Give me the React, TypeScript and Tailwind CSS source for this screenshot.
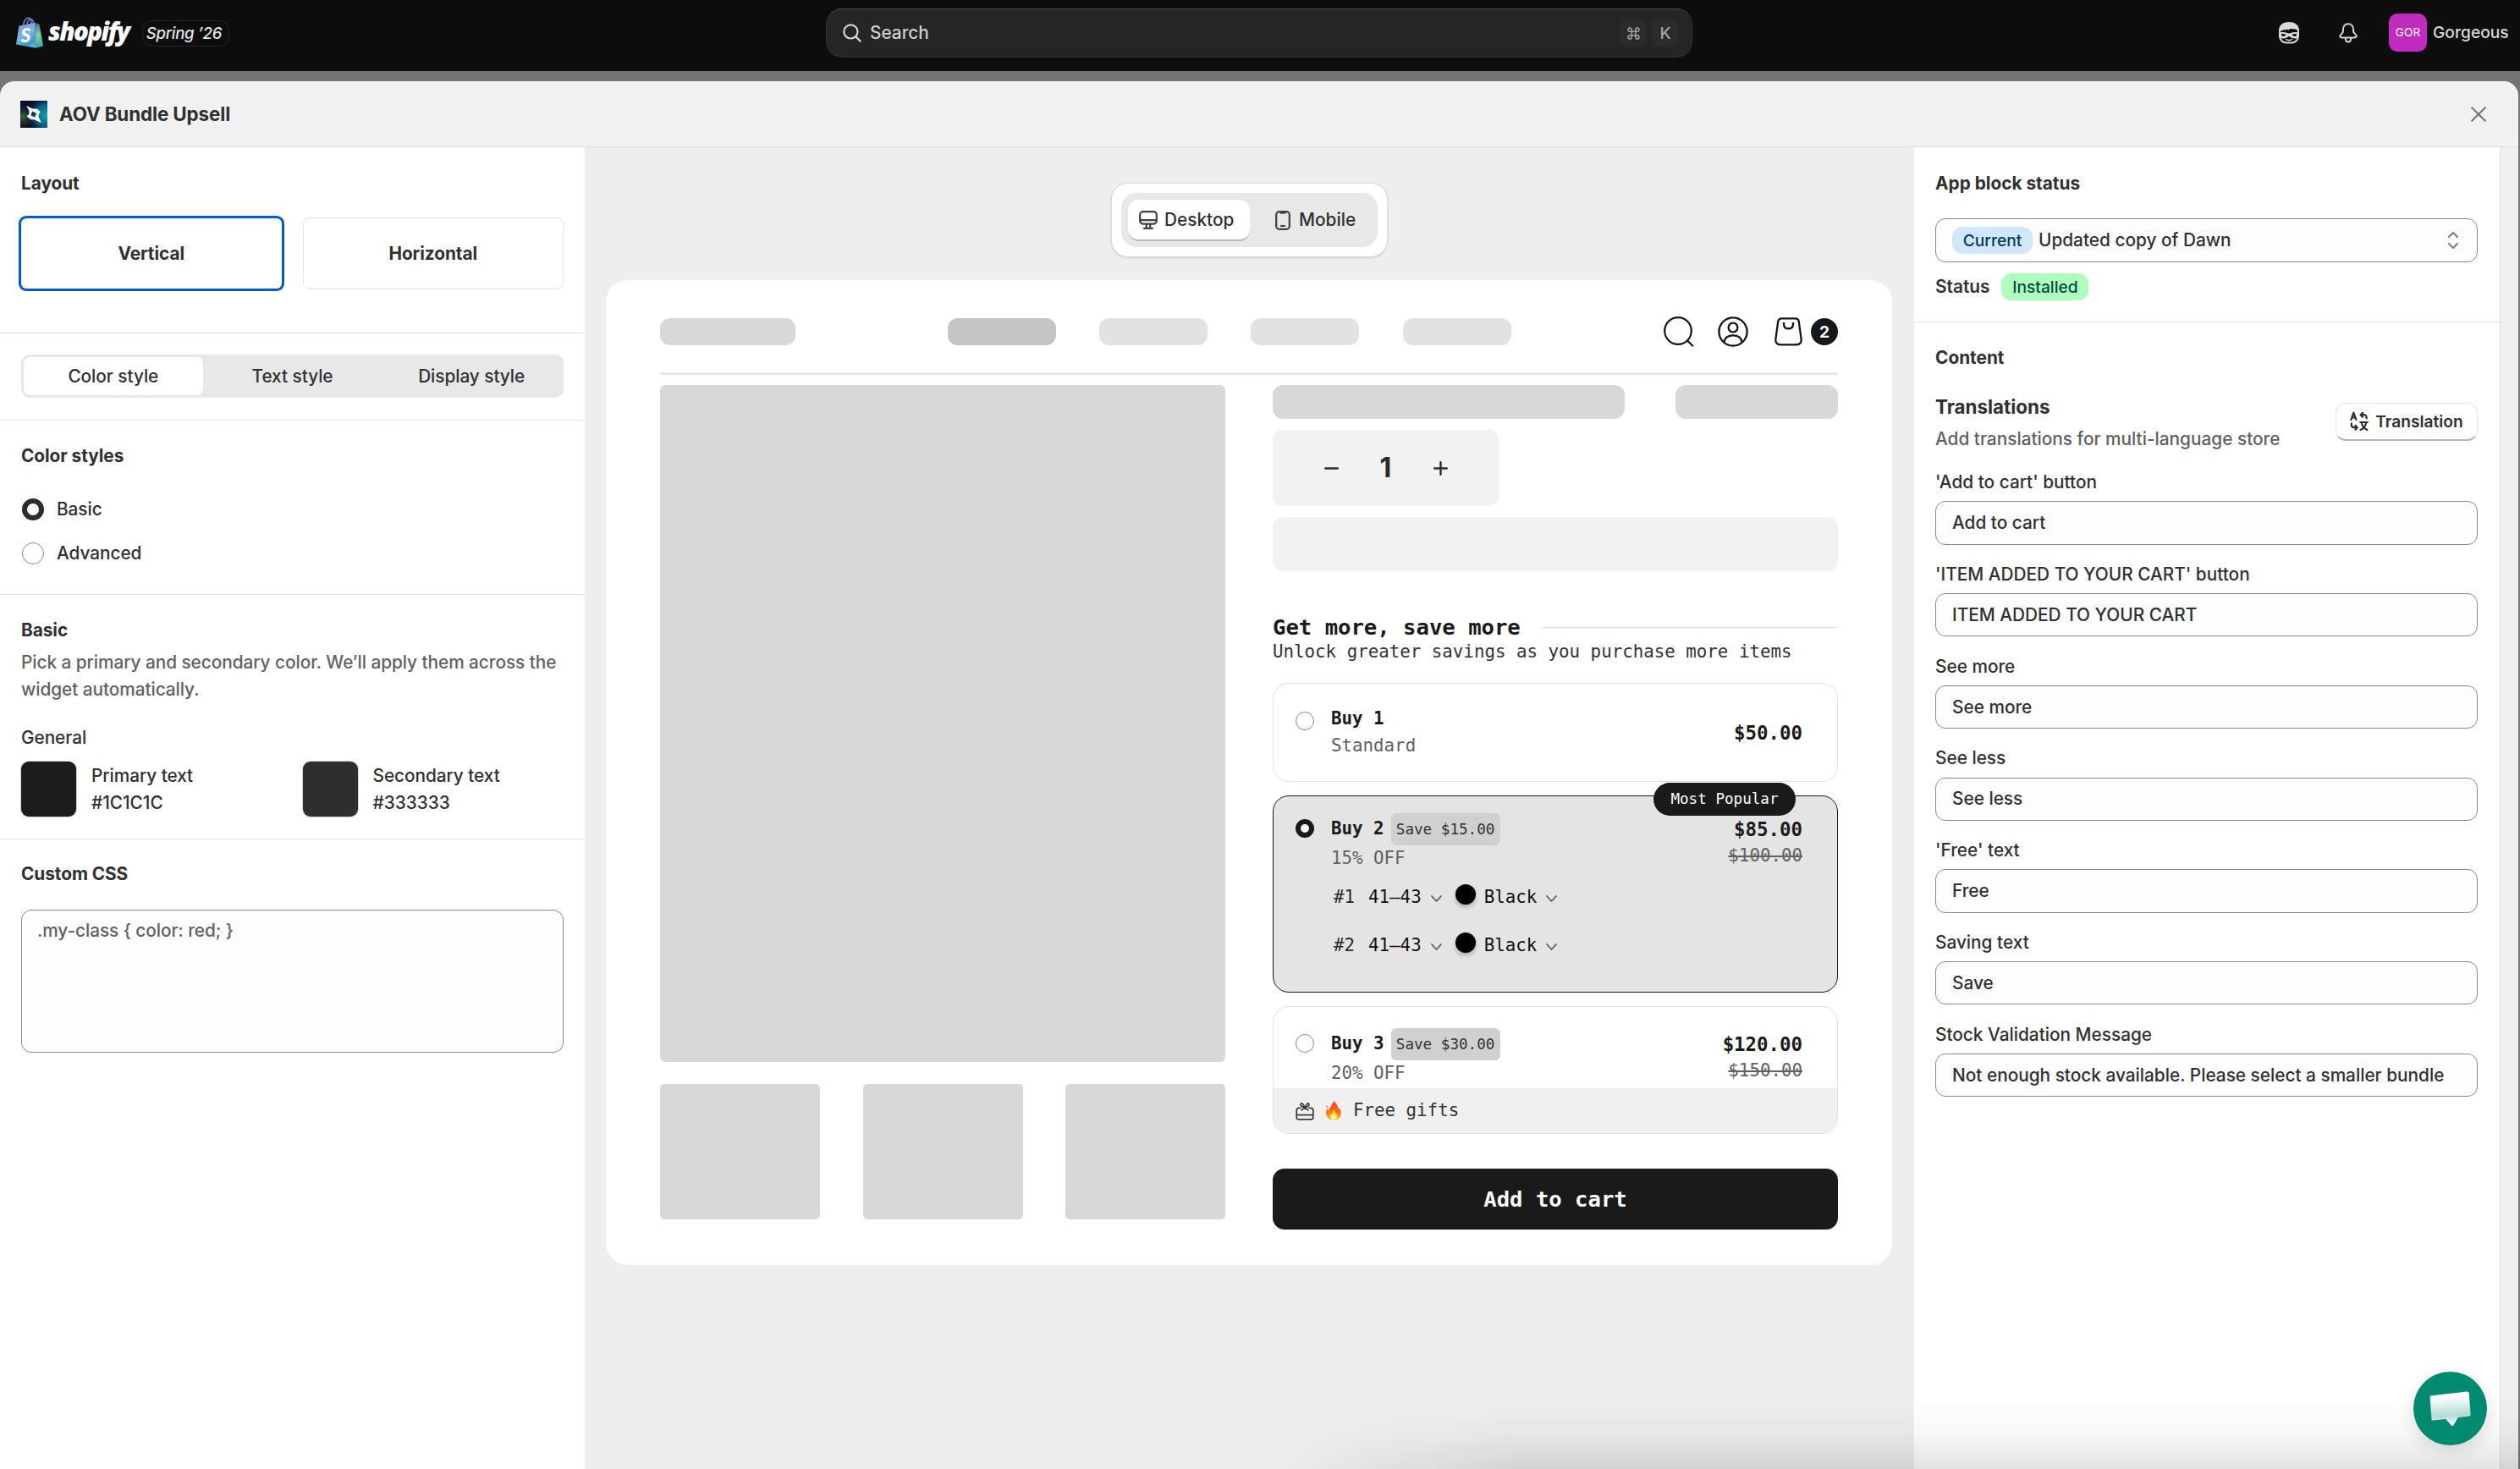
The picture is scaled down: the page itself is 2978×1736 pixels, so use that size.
import React from "react";
import clsx from "clsx";

const sans = "font-['Inter','Liberation_Sans',sans-serif]";
const mono = "font-['DejaVu_Sans_Mono','Liberation_Mono',monospace]";

const ShopifyBag = () => (
  <svg width="32" height="37" viewBox="0 0 32 37" fill="none">
    <defs>
      <linearGradient id="bag" x1="4" y1="6" x2="24" y2="37" gradientUnits="userSpaceOnUse">
        <stop stopColor="#7d96d8" />
        <stop offset="0.45" stopColor="#7fb2e6" />
        <stop offset="0.75" stopColor="#3f95c4" />
        <stop offset="1" stopColor="#7bbdf0" />
      </linearGradient>
      <linearGradient id="bagSide" x1="26" y1="7" x2="27" y2="36" gradientUnits="userSpaceOnUse">
        <stop stopColor="#4a66a8" />
        <stop offset="0.5" stopColor="#79d3a0" />
        <stop offset="1" stopColor="#3aa7a8" />
      </linearGradient>
    </defs>
    <path d="M8.5 10C9 5 12 1.3 14.6 1.2C17.2 1.1 18 5 17.8 8.5M13 9C13.4 5 15.4 2.2 17.4 2.4C19.6 2.8 20.4 5.5 20.6 8" stroke="#6a7fc9" strokeWidth="1.7" />
    <path d="M3.5 10.6L22.5 6.8L23.2 36.8L0 32.4Z" fill="url(#bag)" />
    <path d="M22.5 6.8L27.6 8.8L32 34.4L23.2 36.8Z" fill="url(#bagSide)" />
    <text x="5.6" y="30" fontSize="23" fontWeight="900" fontStyle="italic" fill="#fff" fontFamily="Lato, sans-serif">S</text>
  </svg>
);

const AppLogo = () => (
  <svg width="32" height="32" viewBox="0 0 32 32">
    <defs>
      <radialGradient id="lg1" cx="0.1" cy="0.6" r="0.5">
        <stop stopColor="#3f6b3a" />
        <stop offset="1" stopColor="#0b1430" stopOpacity="0" />
      </radialGradient>
      <radialGradient id="lg2" cx="0.95" cy="0.55" r="0.75">
        <stop stopColor="#0fa3a0" />
        <stop offset="0.55" stopColor="#0d5a86" />
        <stop offset="1" stopColor="#0b1430" stopOpacity="0" />
      </radialGradient>
    </defs>
    <rect width="32" height="32" fill="#090e26" />
    <rect width="32" height="32" fill="url(#lg2)" />
    <rect width="32" height="32" fill="url(#lg1)" />
    <path fillRule="evenodd" d="M7.2 6L14.5 9.6L20 9.8L24 13.2L21.6 16L21.8 19.6L24.8 26L16.8 22.4L12 22L7.6 18.6L10.6 15.6L10.4 12ZM14.2 12.4L12.4 17.2L17 19.8L19.6 15Z" fill="#fff" />
  </svg>
);

const FaceIcon = () => (
  <svg width="24" height="26" viewBox="0 0 24 26" fill="none">
    <rect x="1" y="3" width="22" height="21.6" rx="8" stroke="#d9d9d9" strokeWidth="2" />
    <path d="M0 11C0 4 4 0 12 0C20 0 24 4 24 11L20 8.5L13 8L11.5 9.5L9 8.5L7.5 10L6.5 8.8L4 10Z" fill="#d9d9d9" />
    <path d="M0 12.4C4 11.4 8.6 12.2 12 13.6C15.4 12.2 20 11.4 24 12.4V17.4C20.6 20.8 15 19.6 12 16.8C9 19.6 3.4 20.8 0 17.4Z" fill="#d9d9d9" />
    <path d="M3 13.8L9 14.8L6 16.9L3.4 16.4ZM21 13.8L15 14.8L18 16.9L20.6 16.4Z" fill="#0d0d0d" />
    <path d="M8.6 20.6C10.6 21.8 13.4 21.8 15.4 20.6" stroke="#d9d9d9" strokeWidth="1.6" strokeLinecap="round" />
  </svg>
);

const BellIcon = () => (
  <svg width="22" height="24" viewBox="0 0 22 24" fill="none" stroke="#d9d9d9" strokeWidth="2" strokeLinejoin="round">
    <path d="M11 1.2C7.4 1.2 5.2 3.8 5 7.2L4.8 10.6C4.7 12 1.2 14 1.2 15.6C1.2 17 2.6 17.4 4 17.4H18C19.4 17.4 20.8 17 20.8 15.6C20.8 14 17.3 12 17.2 10.6L17 7.2C16.8 3.8 14.6 1.2 11 1.2Z" />
    <path d="M7.8 18C7.8 21 9 22.6 11 22.6C13 22.6 14.2 21 14.2 18" />
  </svg>
);

const TopBar = () => (
  <header className="flex h-[84px] items-start bg-[#0d0d0d]">
    <div className="flex w-[976px] shrink-0 items-start pl-[19px]">
      <div className="mt-[20px]">
        <ShopifyBag />
      </div>
      <span className="mt-[19px] ml-[6px] w-[99px] font-['Open_Sans'] text-[29.5px] leading-[36px] font-extrabold tracking-[-1.6px] text-white italic">
        shopify
      </span>
      <span className="ml-[12px] mt-[24px] flex h-[31px] w-[103px] items-center justify-center rounded-[12px] border border-[#262626] pr-[4px] text-[18.6px] font-medium tracking-[-0.3px] whitespace-nowrap text-[#e3e3e3] italic">
        Spring ’26
      </span>
    </div>
    <div className="mt-[10px] flex h-[58px] w-[1024px] items-center rounded-[19px] border border-[#333] border-t-[#4a4a4a] bg-[#252525] pr-[15px] pl-[19px]">
      <svg width="22" height="22" viewBox="0 0 22 22" fill="none" stroke="#d4d4d4" strokeWidth="2.2" strokeLinecap="round">
        <circle cx="9.4" cy="9.4" r="8.1" />
        <path d="M15.4 15.4L20.6 20.6" />
      </svg>
      <span className="ml-[10px] flex-1 text-[20.8px] font-[450] text-[#cfcfcf]">Search</span>
      <kbd className="flex h-8 w-8 items-center justify-center rounded-lg bg-[#2b2b2b]">
        <svg width="15" height="15" viewBox="0 0 16 16" fill="none" stroke="#a3a3a3" strokeWidth="1.6">
          <path d="M5.5 5.5V3.3A2.2 2.2 0 1 0 3.3 5.5H12.7A2.2 2.2 0 1 0 10.5 3.3V12.7A2.2 2.2 0 1 0 12.7 10.5H3.3A2.2 2.2 0 1 0 5.5 12.7Z" />
        </svg>
      </kbd>
      <kbd className={clsx(sans, "ml-[6px] flex h-8 w-8 items-center justify-center rounded-lg bg-[#2b2b2b] text-[19.2px] font-medium text-[#a3a3a3]")}>
        K
      </kbd>
    </div>
    <div className="flex flex-1 items-start justify-end pr-[14px]">
      <div className="mt-[26px]">
        <FaceIcon />
      </div>
      <div className="mt-[27px] ml-[47px]">
        <BellIcon />
      </div>
      <div className="mt-[16px] ml-[37px] flex h-[45px] w-[45px] items-center justify-center rounded-[10px] bg-[#c02bc0] text-[13.6px] font-normal text-white">
        GOR
      </div>
      <span className="mt-[16px] ml-[7px] w-[89px] text-[19.2px] leading-[45px] font-[550] text-[#d9d9d9]">Gorgeous</span>
    </div>
  </header>
);

const Radio = ({ checked }: { checked?: boolean }) => (
  <span
    className={clsx(
      "block size-[26px] rounded-full bg-white",
      checked ? "border-[6.5px] border-[#2b2b2b]" : "border border-[#8a8a8a]"
    )}
  />
);

const SectionTitle = ({ children }: { children: React.ReactNode }) => (
  <h3 className="h-8 text-[20.8px] leading-[34px] font-[650]">{children}</h3>
);

const Swatch = ({ label, value, bg }: { label: string; value: string; bg: string }) => (
  <div className="flex">
    <span className={clsx("size-[65px] rounded-[9px] ring-1 ring-[#d0d0d0]", bg)} />
    <div className="mt-px ml-[18px]">
      <p>{label}</p>
      <p>{value}</p>
    </div>
  </div>
);

const LeftPanel = () => (
  <aside className="w-[691px] shrink-0 bg-white text-[20.8px] leading-8 font-[450] tracking-[-0.05px]">
    <section className="h-[220px] border-b border-[#e3e3e3] px-[25px] pt-[26px]">
      <SectionTitle>Layout</SectionTitle>
      <div className="mt-[25px] grid grid-cols-2 gap-6">
        <div className="mt-px mr-px flex h-[83px] items-center justify-center rounded-[6px] font-[650] ring-3 ring-[#005bd3]">
          Vertical
        </div>
        <div className="flex h-[85px] items-center justify-center rounded-[8px] border border-[#e3e3e3] font-[650]">
          Horizontal
        </div>
      </div>
    </section>
    <section className="h-[103px] border-b border-[#e3e3e3] px-[25px] pt-[25px]">
      <div className="flex h-[51px] rounded-[10px] bg-[#e8e8e8] p-[3px]">
        <span className="flex flex-1 items-center justify-center rounded-[8px] bg-white">Color style</span>
        <span className="flex flex-1 items-center justify-center">Text style</span>
        <span className="flex flex-1 items-center justify-center">Display style</span>
      </div>
    </section>
    <section className="h-[206px] border-b border-[#e3e3e3] px-[25px] pt-[25px]">
      <SectionTitle>Color styles</SectionTitle>
      <div className="mt-8 flex items-center gap-[15px] pl-px">
        <Radio checked />
        Basic
      </div>
      <div className="mt-[20px] flex items-center gap-[15px] pl-px">
        <Radio />
        Advanced
      </div>
    </section>
    <section className="h-[289px] border-b border-[#e3e3e3] px-[25px] pt-[25px]">
      <SectionTitle>Basic</SectionTitle>
      <p className="mt-[7px] text-[#616161]">
        Pick a primary and secondary color. We’ll apply them across the widget automatically.
      </p>
      <p className="mt-[25px]">General</p>
      <div className="mt-[12px] grid grid-cols-2 gap-6">
        <Swatch label="Primary text" value="#1C1C1C" bg="bg-[#1c1c1c]" />
        <Swatch label="Secondary text" value="#333333" bg="bg-[#2e2e2e]" />
      </div>
    </section>
    <section className="px-[25px] pt-[24px]">
      <SectionTitle>Custom CSS</SectionTitle>
      <div className="mt-[27px] h-[169px] rounded-[12px] border border-[#8a8a8a] bg-[#fdfdfd] px-[18px] pt-[8px] text-[#616161]">
        {".my-class { color: red; }"}
      </div>
    </section>
  </aside>
);

const Field = ({ label, value }: { label: string; value: string }) => (
  <div className="mb-[19.2px]">
    <p>{label}</p>
    <div className="mt-[6.4px] flex h-[51.2px] items-center rounded-[12px] border border-[#8a8a8a] bg-[#fdfdfd] px-[19px] whitespace-nowrap">
      {value}
    </div>
  </div>
);

const fields = [
  { label: "'Add to cart' button", value: "Add to cart" },
  { label: "'ITEM ADDED TO YOUR CART' button", value: "ITEM ADDED TO YOUR CART" },
  { label: "See more", value: "See more" },
  { label: "See less", value: "See less" },
  { label: "'Free' text", value: "Free" },
  { label: "Saving text", value: "Save" },
  { label: "Stock Validation Message", value: "Not enough stock available. Please select a smaller bundle" },
];

const TranslateIcon = () => (
  <svg width="22" height="24" viewBox="0 0 22 24" fill="none" stroke="#303030" strokeWidth="2.2" strokeLinecap="round" strokeLinejoin="round">
    <path d="M1.4 10L4.4 1.6L7.4 10M2.4 7.4H6.4" />
    <path d="M19.6 8.4V7.4C19.6 5.4 18.4 4.2 16.4 4.2H12.8M15 1.8L12.6 4.2L15 6.6" />
    <path d="M1.8 14.4V16C1.8 18 3 19.2 5 19.2H8.4M6.4 16.8L8.8 19.2L6.4 21.6" />
    <path d="M12.2 13H20.8M13.8 13.4C14.4 17.2 16.6 20.4 20.4 22M19.2 13.4C18.6 17.2 16.4 20.4 12.6 22" />
  </svg>
);

const RightPanel = () => (
  <aside className="w-[692px] shrink-0 bg-white text-[20.8px] leading-8 font-[450]">
    <section className="h-[207px] border-b border-[#e3e3e3] pt-[26px] pr-[26px] pl-[25px]">
      <SectionTitle>App block status</SectionTitle>
      <div className="mt-[26px] flex h-[52px] items-center rounded-[12px] border border-[#8a8a8a] bg-[#fdfdfd] pr-[21px] pl-[19px]">
        <span className="flex h-8 w-[95px] items-center justify-center rounded-[12px] bg-[#d0e7ff] text-[19.2px] font-[550] text-[#003a5a]">
          Current
        </span>
        <span className="ml-[7px] flex-1">Updated copy of Dawn</span>
        <svg width="14" height="22" viewBox="0 0 14 22" fill="none" stroke="#808080" strokeWidth="2.2" strokeLinecap="round" strokeLinejoin="round">
          <path d="M2 7L7 2L12 7M2 15L7 20L12 15" />
        </svg>
      </div>
      <div className="mt-[13px] flex">
        <span className="font-[600]">Status</span>
        <span className="ml-[14px] flex h-8 w-[103px] items-center justify-center rounded-[12px] bg-[#affebf] text-[19.2px] font-[550] text-[#014b40]">
          Installed
        </span>
      </div>
    </section>
    <section className="pt-[25px] pr-[26px] pl-[25px]">
      <SectionTitle>Content</SectionTitle>
      <div className="mt-[27px] flex items-start justify-between">
        <div>
          <h2 className="text-[22.4px] leading-8 font-[650]">Translations</h2>
          <p className="mt-[6px] text-[#616161]">Add translations for multi-language store</p>
        </div>
        <div className="mt-[11px] flex h-[45px] w-[168px] items-center justify-center gap-[8px] rounded-[12px] border border-[#e3e3e3] border-b-2 border-b-[#b5b5b5] text-[19.2px] font-[600]">
          <TranslateIcon />
          Translation
        </div>
      </div>
      <div className="mt-[19px]">
        {fields.map((f) => (
          <Field key={f.label} label={f.label} value={f.value} />
        ))}
      </div>
    </section>
  </aside>
);

const DeviceToggle = () => (
  <div className="ml-[622px] h-[88px] w-[327px] rounded-[20px] border border-[#dadada] bg-white p-[11px] shadow-sm">
    <div className="flex h-[64px] items-center rounded-[18px] bg-[#e8e8e8] pl-[8px] text-[20.8px] font-[450]">
      <span className="flex h-[49px] w-[144px] items-center rounded-[13px] border-b-2 border-[#b5b5b5] bg-white pt-px pl-[13px]">
        <svg width="22" height="22" viewBox="0 0 22 22" fill="none" stroke="#404040" strokeWidth="2.2" strokeLinecap="round">
          <rect x="1.2" y="1.2" width="19.6" height="14.4" rx="3.5" />
          <path d="M1.4 11.2H20.6M8.8 15.8V20.2M13.2 15.8V20.2M6 20.8H16" />
        </svg>
        <span className="ml-[8px]">Desktop</span>
      </span>
      <svg className="ml-[30px]" width="18" height="23" viewBox="0 0 18 23" fill="none" stroke="#404040" strokeWidth="2.2" strokeLinecap="round">
        <rect x="1.2" y="1.2" width="15.6" height="20.6" rx="3.6" />
        <path d="M7 18H11" />
        <path d="M6.5 2.6H11.5" />
      </svg>
      <span className="ml-[10px]">Mobile</span>
    </div>
  </div>
);

const StoreHeader = () => (
  <div className="flex h-[112px] items-center border-b-[3px] border-[#e6e6e6] pt-[13px]">
    <span className="h-8 w-[160px] rounded-[12px] bg-[#d8d8d8]" />
    <span className="ml-[180px] h-8 w-[128px] rounded-[12px] bg-[#c4c4c4]" />
    <span className="ml-[51.2px] h-8 w-[128px] rounded-[12px] bg-[#e2e2e2]" />
    <span className="ml-[51.2px] h-8 w-[128px] rounded-[12px] bg-[#e2e2e2]" />
    <span className="ml-[51.2px] h-8 w-[128px] rounded-[12px] bg-[#e2e2e2]" />
    <div className="ml-auto flex items-center text-[#111718]">
      <svg width="36" height="36" viewBox="0 0 36 36" fill="none" stroke="currentColor" strokeWidth="2.2">
        <circle cx="17" cy="17" r="15.8" />
        <path d="M28 28.4L34.8 35.2" />
      </svg>
      <svg className="ml-[28px]" width="36" height="36" viewBox="0 0 36 36" fill="none" stroke="currentColor" strokeWidth="2.3">
        <circle cx="18" cy="18" r="16.6" />
        <circle cx="18" cy="13" r="5.4" />
        <path d="M7.2 30.4C8.2 25.4 12.4 22.4 18 22.4C23.6 22.4 27.8 25.4 28.8 30.4" />
      </svg>
      <svg className="ml-[31px]" width="33" height="34" viewBox="0 0 33 34" fill="none" stroke="currentColor" strokeWidth="2.3">
        <path d="M8.6 1.4H24.4C27 1.4 28.4 2.6 28.8 5L31.6 25.6C32.1 29.8 30 32.4 26 32.4H7C3 32.4 0.9 29.8 1.4 25.6L4.2 5C4.6 2.6 6 1.4 8.6 1.4Z" />
        <path d="M11 6V8C11 11.4 13 13.4 16.5 13.4C20 13.4 22 11.4 22 8V6" />
      </svg>
      <span className="ml-[10px] flex size-8 items-center justify-center rounded-full bg-[#16191a] text-[19.2px] font-bold text-white">
        2
      </span>
    </div>
  </div>
);

const Chevron = () => (
  <svg className="mt-[2px]" width="13" height="8" viewBox="0 0 13 8" fill="none" stroke="#5c5f62" strokeWidth="1.8" strokeLinecap="round" strokeLinejoin="round">
    <path d="M1 1L6.5 7L12 1" />
  </svg>
);

const Variant = ({ n }: { n: string }) => (
  <div className="flex h-[57px] items-center text-[#111]">
    <span className="text-[#2a2a2a]">{n}</span>
    <span className="ml-[16px]">41–43</span>
    <span className="ml-[11px]">
      <Chevron />
    </span>
    <span className="mb-[7px] ml-[16px] size-6 rounded-full bg-black shadow-[0_3px_5px_rgba(0,0,40,0.25)]" />
    <span className="ml-[10px]">Black</span>
    <span className="ml-[11px]">
      <Chevron />
    </span>
  </div>
);

const OfferRadio = ({ checked }: { checked?: boolean }) => (
  <span
    className={clsx(
      "block size-[22px] shrink-0 rounded-full bg-white",
      checked ? "border-[6px] border-[#1a1a1a]" : "border border-[#8a8a8a]"
    )}
  />
);

type OfferProps = { title: string; save: string; off: string; price: string; old: string; checked?: boolean };

const OfferRow = ({ title, save, off, price, old, checked }: OfferProps) => (
  <div className="flex">
    <div className="mt-[7px]">
      <OfferRadio checked={checked} />
    </div>
    <div className="ml-[20px] flex-1">
      <div className="flex h-[38px] items-center">
        <span className="font-bold text-[#1a1a1a]">{title}</span>
        <span className="ml-[8px] flex h-[38px] w-[129px] items-center justify-center rounded-[6px] bg-[#d0d0d0] text-[17.6px] text-[#333]">
          {save}
        </span>
      </div>
      <p className="leading-[31px] text-[#616161]">{off}</p>
    </div>
    <div className="text-right">
      <p className="text-[22.4px] leading-[38px] font-bold text-[#1a1a1a]">{price}</p>
      <p className="leading-6 text-[#616161] line-through">{old}</p>
    </div>
  </div>
);

const Offers = () => (
  <div className={clsx(mono, "text-[20.8px]")}>
    <div className="mt-[50px] flex h-8 items-center text-[25.6px] font-bold text-[#1a1a1a]">
      Get more, save more
      <span className="ml-[26px] h-px flex-1 bg-[#dcdcdc]" />
    </div>
    <p className="h-[25px] leading-[27px] text-[#333]">Unlock greater savings as you purchase more items</p>

    <div className="mt-[25px] flex h-[117px] items-center rounded-[19px] border border-[#e0e0e0] pr-[41px] pl-[26px]">
      <div className="mb-[28px]">
        <OfferRadio />
      </div>
      <div className="mb-px ml-[20px] flex-1 leading-8">
        <p className="font-bold text-[#1a1a1a]">Buy 1</p>
        <p className="text-[#616161]">Standard</p>
      </div>
      <span className="mt-[2px] text-[22.4px] font-bold text-[#1a1a1a]">$50.00</span>
    </div>

    <div className="relative mt-4 h-[233px] rounded-[19px] border border-[#1a1a1a] bg-[#e4e4e4] pt-[20px] pr-[41px] pl-[26px]">
      <span className="absolute -top-[16px] right-[49px] flex h-[39px] w-[168px] items-center justify-center rounded-[20px] bg-[#1a1a1a] text-[17.6px] text-white">
        Most Popular
      </span>
      <OfferRow checked title="Buy 2" save="Save $15.00" off="15% OFF" price="$85.00" old="$100.00" />
      <div className="mt-[2px] ml-[45px]">
        <Variant n="#1" />
        <Variant n="#2" />
      </div>
    </div>

    <div className="mt-4 flex h-[151px] flex-col overflow-hidden rounded-[19px] border border-[#e0e0e0] pt-[25px]">
      <div className="h-[71px] shrink-0 pr-[41px] pl-[26px]">
        <OfferRow title="Buy 3" save="Save $30.00" off="20% OFF" price="$120.00" old="$150.00" />
      </div>
      <div className="flex flex-1 items-center bg-[#f0f0f0] pt-px pl-[26px] text-[#333]">
        <svg width="22" height="22" viewBox="0 0 22 22" fill="none" stroke="#3a3a3a" strokeWidth="1.7" strokeLinejoin="round">
          <path d="M6.6 7.4H4.2A3 3 0 0 0 1.2 10.4V18.2A2.6 2.6 0 0 0 3.8 20.8H18.2A2.6 2.6 0 0 0 20.8 18.2V10.4A3 3 0 0 0 17.8 7.4H15.4M1.2 15.6H20.8" />
          <path d="M11 7C9.4 3.4 8.4 1.4 6.8 2C5.2 3 6 6 11 7C16 6 16.8 3 15.2 2C13.6 1.4 12.6 3.4 11 7L6.6 10.4M11 7L15.4 10.4" />
        </svg>
        <svg className="mb-[2px] ml-[13px]" width="20" height="24" viewBox="0 0 20 24">
          <defs>
            <linearGradient id="flame" x1="0" y1="0" x2="0" y2="1">
              <stop stopColor="#ff3a1c" />
              <stop offset="0.55" stopColor="#ff6a14" />
              <stop offset="1" stopColor="#ffb21c" />
            </linearGradient>
          </defs>
          <path d="M11 0.6C11.8 4.4 15.6 6.4 16 11.4C16.6 11 16.8 10 16.8 9.2C19.8 13.4 19.6 18.6 16 21.6C12.6 24.2 6.6 24 3.6 21.2C-0.2 17.6 0.6 12.6 3 10C3.2 11.6 3.8 12.6 4.6 12.8C3.8 9 8 7.6 8.2 4.4C9.6 3.6 10.6 2.4 11 0.6Z" fill="url(#flame)" />
          <path d="M1.4 6.2C3 6.6 3.4 8 2.4 9.2C1.4 8.6 1 7.4 1.4 6.2Z" fill="#ff5a28" />
          <path d="M10.4 11.6C10.6 14.8 14.6 15.6 14.6 19C14.6 21.6 12.4 23.2 10 23.2C7.4 23.2 5.4 21.6 5.4 19.2C5.4 17.4 6.2 16.2 7.2 15.6C7.4 16.6 8 17 8.6 16.8C8.2 14.8 9 12.8 10.4 11.6Z" fill="#ffd83a" />
          <ellipse cx="10" cy="20.4" rx="3" ry="2.4" fill="#fff6b0" />
        </svg>
        <span className="ml-[13px]">Free gifts</span>
      </div>
    </div>

    <div className="mt-[41px] flex h-[72px] items-center justify-center rounded-[14px] bg-[#1a1a1a] text-[25.6px] font-bold text-white">
      Add to cart
    </div>
  </div>
);

const Preview = () => (
  <main className="flex flex-1 flex-col items-start bg-[#eee] pt-[42px]">
    <DeviceToggle />
    <div className="mt-[27px] ml-[25px] h-[1164px] w-[1520px] rounded-[26px] bg-white px-[64px]">
      <StoreHeader />
      <div className="mt-[12px] flex justify-between">
        <div className="w-[668px]">
          <div className="h-[800px] rounded-[6px] bg-[#d8d8d8]" />
          <div className="mt-[26px] flex justify-between">
            <span className="h-[160px] w-[189px] rounded-[5px] bg-[#d8d8d8]" />
            <span className="h-[160px] w-[189px] rounded-[5px] bg-[#d8d8d8]" />
            <span className="h-[160px] w-[189px] rounded-[5px] bg-[#d8d8d8]" />
          </div>
        </div>
        <div className="w-[668px]">
          <div className="flex justify-between">
            <span className="h-10 w-[416px] rounded-[12px] bg-[#d8d8d8]" />
            <span className="h-10 w-[192px] rounded-[12px] bg-[#d8d8d8]" />
          </div>
          <div className="mt-[13px] flex h-[90px] w-[267px] items-center justify-center gap-[49px] rounded-[12px] bg-[#f2f2f2] text-[#2b2b2b]">
            <svg width="17" height="17" viewBox="0 0 17 17" stroke="currentColor" strokeWidth="2.4" strokeLinecap="round">
              <path d="M1.2 8.5H15.8" />
            </svg>
            <span className="w-[14px] text-center text-[32px] leading-none font-bold">1</span>
            <svg width="17" height="17" viewBox="0 0 17 17" stroke="currentColor" strokeWidth="2.4" strokeLinecap="round">
              <path d="M1.2 8.5H15.8M8.5 1.2V15.8" />
            </svg>
          </div>
          <div className="mt-[13px] h-[64px] rounded-[12px] bg-[#f2f2f2]" />
          <Offers />
        </div>
      </div>
    </div>
  </main>
);

const ChatButton = () => (
  <div className="absolute right-[39px] bottom-[28px] flex size-[87px] items-center justify-center rounded-full bg-[#008a70] shadow-[0_6px_20px_rgba(0,0,0,0.12)]">
    <svg width="49" height="42" viewBox="0 0 49 42">
      <defs>
        <linearGradient id="chat" x1="0.45" y1="0" x2="0.55" y2="1">
          <stop offset="0.15" stopColor="#fff" />
          <stop offset="0.7" stopColor="#b4dad2" />
          <stop offset="1" stopColor="#fff" />
        </linearGradient>
      </defs>
      <path d="M3 5.2L44 0.6C45.8 0.4 46.6 1.2 46.8 2.8L48.6 27C48.8 28.8 48 29.6 46.4 29.8L34 31L28.6 40C27.8 41.2 26.6 41.2 25.6 40.2L19 33L5 34.6C3.4 34.8 2.6 34 2.4 32.4L0.6 8C0.4 6.2 1.2 5.4 3 5.2Z" fill="url(#chat)" />
    </svg>
  </div>
);

export default function App() {
  return (
    <div className={clsx(sans, "relative flex h-[1736px] w-[2978px] flex-col overflow-hidden bg-[#757575] text-[#303030]")}>
      <TopBar />
      <div className="mt-[12px] mr-[2px] flex flex-1 flex-col overflow-hidden rounded-t-[17px] bg-[#f1f1f1]">
        <div className="flex h-[78px] items-center border-b border-[#dcdcdc] pr-[38px] pl-[24px]">
          <AppLogo />
          <h1 className="ml-[14px] flex-1 text-[22.4px] font-[650] tracking-[-0.12px]">AOV Bundle Upsell</h1>
          <svg width="18" height="18" viewBox="0 0 18 18" stroke="#777" strokeWidth="2.1" strokeLinecap="round">
            <path d="M1.2 1.2L16.8 16.8M16.8 1.2L1.2 16.8" />
          </svg>
        </div>
        <div className="flex flex-1">
          <LeftPanel />
          <Preview />
          <RightPanel />
          <div className="w-[22px] border-l border-[#dcdcdc] bg-[#efefef]" />
        </div>
      </div>
      {/* soft shade along the bottom edge */}
      <div className="absolute right-0 bottom-0 h-[84px] w-[1478px] bg-linear-to-b from-transparent via-black/3 to-black/11 mask-l-from-80% mask-l-to-100%" />
      <ChatButton />
    </div>
  );
}
